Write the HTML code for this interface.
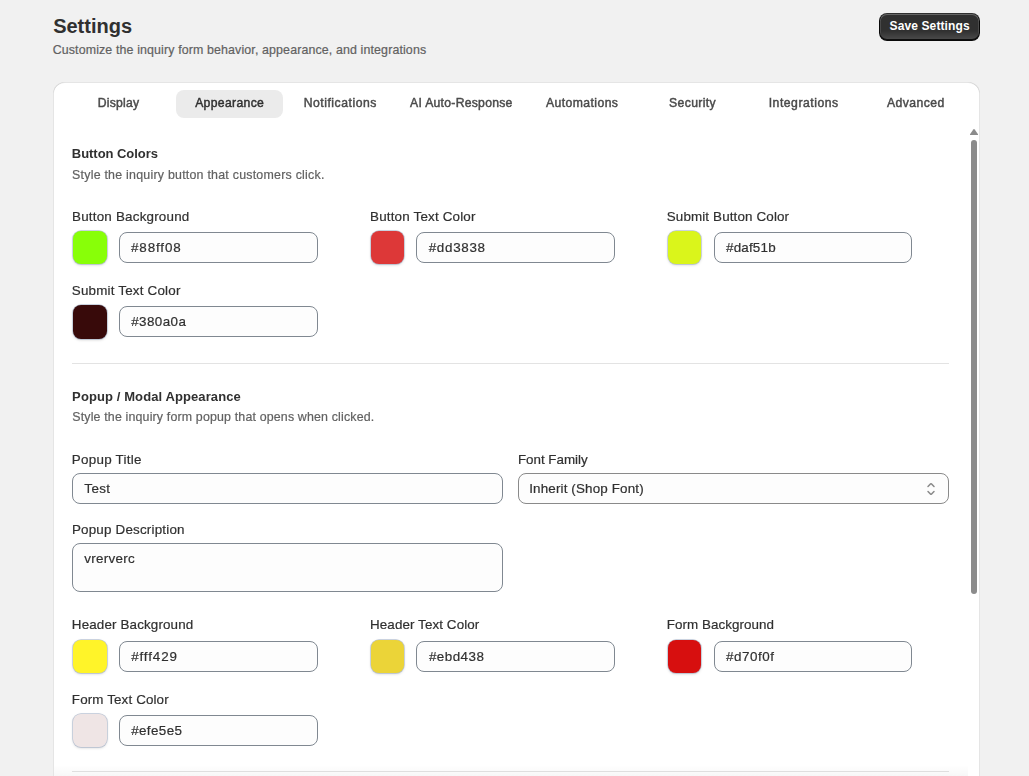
<!DOCTYPE html>
<html lang="en">
<head>
<meta charset="utf-8">
<title>Settings</title>
<style>
*{box-sizing:border-box;margin:0;padding:0}
html,body{width:1029px;height:776px;overflow:hidden;background:#f1f1f1}
body{font-family:"Liberation Sans",sans-serif;font-size:13px;color:#303030;position:relative}
.t{position:absolute;white-space:nowrap;line-height:20px;height:20px;font-weight:400;-webkit-text-stroke:.2px currentColor}
.b{-webkit-text-stroke:0}
.save{position:absolute;left:879px;top:13px;width:101px;height:27.6px;border-radius:8px;background:linear-gradient(180deg,rgba(48,48,48,0) 63.53%,rgba(255,255,255,.15) 100%),#303030;box-shadow:0 -1px 0 1px rgba(0,0,0,.8) inset,0 0 0 1px #303030 inset,0 .5px 0 1.5px rgba(255,255,255,.25) inset}
.card{position:absolute;left:53px;top:82px;width:927px;height:720px;background:#fff;border-radius:12px;box-shadow:1px 0 0 0 rgba(0,0,0,.10) inset,-1px 0 0 0 rgba(0,0,0,.10) inset,0 1px 0 0 rgba(204,204,204,.5) inset}
.tabon{position:absolute;left:176px;top:90px;width:107px;height:28px;border-radius:8px;background:#ebebeb}
.sw{position:absolute;width:34.8px;height:33.8px;border-radius:8px;box-shadow:0 0 0 .7px rgba(160,175,200,.7),0 1px 3px rgba(0,0,0,.18)}
.in{position:absolute;height:30.8px;border:.9px solid #808891;border-radius:8px;background:#fdfdfd}
.hr{position:absolute;left:72px;width:877px;height:1px;background:#e3e3e3}
.thumb{position:absolute;left:971.2px;top:140px;width:5.8px;height:454px;border-radius:3px;background:#8b8b8b}
.arrow{position:absolute;left:970px;top:129px;width:8px;height:6px}
.gl{position:absolute;left:0;top:0;width:1029px;height:776px;will-change:transform}
.fade{position:absolute;left:54px;top:765px;width:914px;height:11px;background:linear-gradient(180deg,rgba(0,0,0,0),rgba(0,0,0,.032))}
.chev{position:absolute;left:920.7px;top:479px;width:20px;height:20px}
</style>
</head>
<body>
<div class="save"></div>
<div class="card"></div>
<div class="tabon"></div>
<svg class="arrow" viewBox="0 0 8 6"><path d="M0 6 L0 5.2 L3.3 0.5 Q4 -0.3 4.7 0.5 L8 5.2 L8 6 Z" fill="#8b8b8b"/></svg>
<div class="thumb"></div>
<div class="sw" style="left:72.6px;top:230.6px;width:34.8px;background:#88ff08"></div>
<div class="in" style="left:119.0px;top:232.1px;width:198.9px"></div>
<div class="sw" style="left:370.8px;top:230.6px;width:33.6px;background:#dd3838"></div>
<div class="in" style="left:416.1px;top:232.1px;width:198.6px"></div>
<div class="sw" style="left:667.6px;top:230.6px;width:33.8px;background:#daf51b"></div>
<div class="in" style="left:714.1px;top:232.1px;width:197.6px"></div>
<div class="sw" style="left:72.6px;top:304.9px;width:34.8px;background:#380a0a"></div>
<div class="in" style="left:119.0px;top:306.2px;width:198.9px"></div>
<div class="sw" style="left:72.6px;top:639.5px;width:34.8px;background:#fff429"></div>
<div class="in" style="left:119.0px;top:641.1px;width:198.9px"></div>
<div class="sw" style="left:370.8px;top:639.5px;width:33.6px;background:#ebd438"></div>
<div class="in" style="left:416.1px;top:641.1px;width:198.6px"></div>
<div class="sw" style="left:667.6px;top:639.5px;width:33.8px;background:#d70f0f"></div>
<div class="in" style="left:714.1px;top:641.1px;width:197.6px"></div>
<div class="sw" style="left:72.6px;top:713.7px;width:34.8px;background:#efe5e5"></div>
<div class="in" style="left:119.0px;top:715.2px;width:198.9px"></div>
<div class="hr" style="top:363px"></div>
<div class="in" style="left:72.1px;top:473.0px;width:430.6px"></div>
<div class="in" style="left:518.0px;top:473.0px;width:430.8px;border-color:#8a8a8a"></div>
<svg class="chev" viewBox="0 0 20 20" fill="#8a8a8a"><path d="M10.884 4.323a1.25 1.25 0 0 0-1.768 0l-2.646 2.647a.75.75 0 0 0 1.06 1.06l2.47-2.47 2.47 2.47a.75.75 0 1 0 1.06-1.06l-2.646-2.647Z"/><path d="m13.53 13.03-2.646 2.647a1.25 1.25 0 0 1-1.768 0l-2.646-2.647a.75.75 0 0 1 1.06-1.06l2.47 2.47 2.47-2.47a.75.75 0 0 1 1.06 1.06Z"/></svg>
<div class="in" style="left:72.1px;top:543.1px;width:430.6px;height:49.2px"></div>
<div class="hr" style="top:771px"></div>
<div class="fade"></div>
<h1 class="t b" id="t0" style="left:53.17px;top:15.87px;font-size:20px;letter-spacing:0.001px;color:#303030;font-weight:700;">Settings</h1>
<p class="t" id="t1" style="left:52.68px;top:40.30px;font-size:12.4px;letter-spacing:0.131px;color:#616161;">Customize the inquiry form behavior, appearance, and integrations</p>
<div class="t b" id="t2" style="left:889.61px;top:15.94px;font-size:12px;letter-spacing:0.106px;color:#ffffff;font-weight:700;">Save Settings</div>
<div class="gl">
<div class="t" id="t3" style="left:97.79px;top:92.67px;font-size:12.2px;letter-spacing:0.221px;color:#4a4a4a;-webkit-text-stroke:0.45px currentColor;">Display</div>
<div class="t" id="t4" style="left:195.15px;top:92.67px;font-size:12.2px;letter-spacing:0.337px;color:#303030;-webkit-text-stroke:0.45px currentColor;">Appearance</div>
<div class="t" id="t5" style="left:303.67px;top:92.67px;font-size:12.2px;letter-spacing:0.530px;color:#4a4a4a;-webkit-text-stroke:0.45px currentColor;">Notifications</div>
<div class="t" id="t6" style="left:410.12px;top:92.67px;font-size:12.2px;letter-spacing:0.270px;color:#4a4a4a;-webkit-text-stroke:0.45px currentColor;">AI Auto-Response</div>
<div class="t" id="t7" style="left:545.95px;top:92.67px;font-size:12.2px;letter-spacing:0.427px;color:#4a4a4a;-webkit-text-stroke:0.45px currentColor;">Automations</div>
<div class="t" id="t8" style="left:669.02px;top:92.67px;font-size:12.2px;letter-spacing:0.376px;color:#4a4a4a;-webkit-text-stroke:0.45px currentColor;">Security</div>
<div class="t" id="t9" style="left:768.69px;top:92.67px;font-size:12.2px;letter-spacing:0.518px;color:#4a4a4a;-webkit-text-stroke:0.45px currentColor;">Integrations</div>
<div class="t" id="t10" style="left:886.95px;top:92.67px;font-size:12.2px;letter-spacing:0.441px;color:#4a4a4a;-webkit-text-stroke:0.45px currentColor;">Advanced</div>
<h2 class="t b" id="t11" style="left:71.85px;top:143.50px;font-size:13px;letter-spacing:-0.051px;color:#303030;font-weight:700;">Button Colors</h2>
<p class="t" id="t12" style="left:72.06px;top:164.70px;font-size:12.4px;letter-spacing:0.235px;color:#616161;">Style the inquiry button that customers click.</p>
<label class="t" id="t13" style="left:72.09px;top:207.36px;font-size:13.4px;letter-spacing:0.206px;color:#303030;">Button Background</label>
<label class="t" id="t14" style="left:370.09px;top:207.36px;font-size:13.4px;letter-spacing:0.178px;color:#303030;">Button Text Color</label>
<label class="t" id="t15" style="left:666.73px;top:207.36px;font-size:13.4px;letter-spacing:0.140px;color:#303030;">Submit Button Color</label>
<label class="t" id="t16" style="left:71.77px;top:281.46px;font-size:13.4px;letter-spacing:0.199px;color:#303030;">Submit Text Color</label>
<div class="t" id="t17" style="left:131.00px;top:238.06px;font-size:13.4px;letter-spacing:0.882px;color:#303030;">#88ff08</div>
<div class="t" id="t18" style="left:428.73px;top:238.06px;font-size:13.4px;letter-spacing:0.700px;color:#303030;">#dd3838</div>
<div class="t" id="t19" style="left:726.00px;top:238.06px;font-size:13.4px;letter-spacing:0.198px;color:#303030;">#daf51b</div>
<div class="t" id="t20" style="left:131.17px;top:312.16px;font-size:13.4px;letter-spacing:0.433px;color:#303030;">#380a0a</div>
<h2 class="t b" id="t21" style="left:72.11px;top:386.60px;font-size:13px;letter-spacing:0.098px;color:#303030;font-weight:700;">Popup / Modal Appearance</h2>
<p class="t" id="t22" style="left:72.25px;top:406.70px;font-size:12.4px;letter-spacing:0.164px;color:#616161;">Style the inquiry form popup that opens when clicked.</p>
<label class="t" id="t23" style="left:71.87px;top:450.26px;font-size:13.4px;letter-spacing:0.250px;color:#303030;">Popup Title</label>
<label class="t" id="t24" style="left:517.88px;top:450.26px;font-size:13.4px;letter-spacing:-0.011px;color:#303030;">Font Family</label>
<label class="t" id="t25" style="left:71.96px;top:520.36px;font-size:13.4px;letter-spacing:0.195px;color:#303030;">Popup Description</label>
<div class="t" id="t26" style="left:84.30px;top:479.16px;font-size:13.4px;letter-spacing:0.409px;color:#303030;">Test</div>
<div class="t" id="t27" style="left:529.22px;top:479.16px;font-size:13.4px;letter-spacing:0.152px;color:#303030;">Inherit (Shop Font)</div>
<div class="t" id="t28" style="left:84.37px;top:549.26px;font-size:13.4px;letter-spacing:0.279px;color:#303030;">vrerverc</div>
<label class="t" id="t29" style="left:71.87px;top:614.56px;font-size:13.4px;letter-spacing:0.142px;color:#303030;">Header Background</label>
<label class="t" id="t30" style="left:370.06px;top:614.56px;font-size:13.4px;letter-spacing:0.095px;color:#303030;">Header Text Color</label>
<label class="t" id="t31" style="left:666.64px;top:614.56px;font-size:13.4px;letter-spacing:0.071px;color:#303030;">Form Background</label>
<label class="t" id="t32" style="left:71.87px;top:690.06px;font-size:13.4px;letter-spacing:0.128px;color:#303030;">Form Text Color</label>
<div class="t" id="t33" style="left:131.17px;top:647.06px;font-size:13.4px;letter-spacing:0.880px;color:#303030;">#fff429</div>
<div class="t" id="t34" style="left:428.88px;top:647.06px;font-size:13.4px;letter-spacing:0.472px;color:#303030;">#ebd438</div>
<div class="t" id="t35" style="left:725.88px;top:647.06px;font-size:13.4px;letter-spacing:0.583px;color:#303030;">#d70f0f</div>
<div class="t" id="t36" style="left:131.17px;top:721.26px;font-size:13.4px;letter-spacing:0.397px;color:#303030;">#efe5e5</div>
</div>
</body>
</html>
